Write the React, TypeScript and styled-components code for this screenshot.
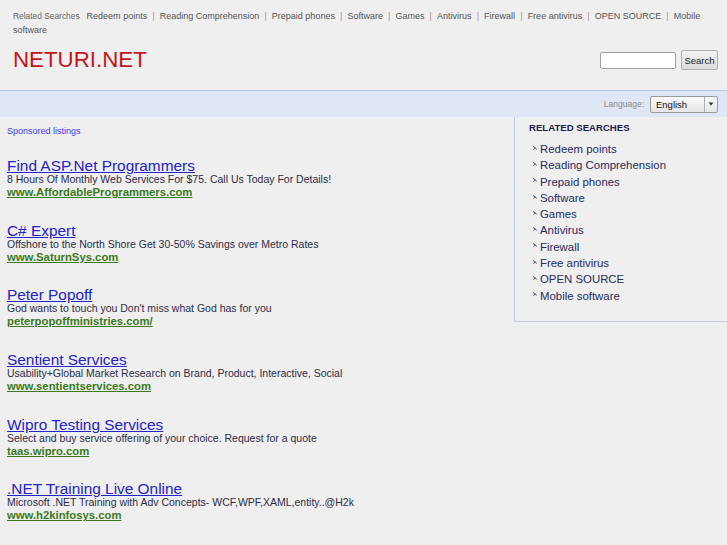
import React from "react";
import styled, { createGlobalStyle } from "styled-components";

const Global = createGlobalStyle`
  html, body { margin: 0; padding: 0; background: #efefef; }
  body { font-family: "Liberation Sans", Arial, sans-serif; }
`;

const Page = styled.div`
  width: 727px;
  min-height: 545px;
  background: #efefef;
  overflow: hidden;
`;

const Header = styled.div`
  padding: 9px 9px 0 13px;
`;

const TopLinks = styled.div`
  font-size: 9px;
  line-height: 14px;
  color: #555;
  width: 701px;
`;

const TopLabel = styled.span`
  font-size: 8.4px;
  color: #666;
  margin-right: 7px;
`;

const TopLink = styled.a`
  color: #555;
  text-decoration: none;
`;

const Word = styled.span``;

const Sep = styled.span`
  color: #b38aa0;
  margin: 0 5.1px;
`;

const LogoRow = styled.div`
  display: flex;
  align-items: center;
  justify-content: space-between;
  height: 34px;
  margin-top: 6px;
`;

const Logo = styled.div`
  font-size: 22.3px;
  color: #c4161c;
`;

const SearchForm = styled.div`
  display: flex;
  align-items: center;
  gap: 5px;
`;

const SearchInput = styled.div`
  width: 74px;
  height: 15px;
  background: #fff;
  border: 1px solid #a0a0a0;
  border-radius: 2px;
`;

const SearchButton = styled.div`
  width: 35px;
  height: 18px;
  border: 1px solid #b0b0b0;
  border-radius: 2px;
  background: linear-gradient(#f2f2f2, #dcdcdc);
  font-size: 9.5px;
  color: #222;
  display: flex;
  align-items: center;
  justify-content: center;
`;

const Band = styled.div`
  margin-top: 13px;
  height: 26px;
  border-top: 1px solid #b5c6ee;
  background: #dfe6f5;
  display: flex;
  align-items: center;
  justify-content: flex-end;
  padding-right: 9px;
  gap: 6px;
`;

const LangLabel = styled.span`
  font-size: 8.5px;
  color: #8c8c8c;
`;

const Select = styled.div`
  width: 66px;
  height: 15px;
  border: 1px solid #9a9a9a;
  border-radius: 2px;
  background: linear-gradient(#fafafa, #e6e6e6);
  display: flex;
  align-items: center;
  font-size: 9.5px;
  color: #111;
`;

const SelectText = styled.span`
  flex: 1;
  padding-left: 5px;
`;

const SelectArrow = styled.span`
  width: 12px;
  height: 100%;
  border-left: 1px solid #b0b0b0;
  display: flex;
  align-items: center;
  justify-content: center;
`;

const Body = styled.div`
  display: flex;
  align-items: flex-start;
`;

const Main = styled.div`
  flex: 1;
  padding: 9px 0 0 7px;
`;

const Sponsored = styled.div`
  font-size: 9px;
  line-height: 11px;
  color: #3b3bea;
  margin-bottom: 21px;
`;

const Ad = styled.div`
  margin-bottom: 23.7px;
`;

const AdTitle = styled.a`
  display: block;
  font-size: 15.4px;
  line-height: 15px;
  color: #2323c8;
  text-decoration: underline;
`;

const AdDesc = styled.div`
  font-size: 10.5px;
  line-height: 13px;
  color: #2c2c48;
`;

const AdUrl = styled.a`
  display: block;
  font-size: 11.3px;
  line-height: 13px;
  font-weight: bold;
  color: #3a7a1c;
  text-decoration: underline;
`;

const Sidebar = styled.div`
  width: 198px;
  height: 199px;
  border-left: 1px solid #bccbea;
  border-bottom: 1px solid #bccbea;
  padding: 5px 0 0 14px;
`;

const SideHead = styled.div`
  font-size: 9.6px;
  font-weight: bold;
  color: #1c2050;
  line-height: 12px;
  margin-bottom: 7px;
`;

const SideList = styled.ul`
  list-style: none;
  margin: 0;
  padding: 0 0 0 4px;
`;

const SideItem = styled.li`
  display: flex;
  align-items: center;
  font-size: 11.4px;
  line-height: 16.3px;
  color: #262b5e;
  gap: 3px;
`;

const Bullet = () => (
  <svg width="4" height="4" viewBox="0 0 4 4" style={{ marginTop: -3 }}>
    <path d="M0 0.5 L2.5 2 L0.5 3.5 M2.5 2 L3.5 3.5" stroke="#3a3f70" strokeWidth="0.9" fill="none" />
  </svg>
);

const topLinks = [
  "Redeem points",
  "Reading Comprehension",
  "Prepaid phones",
  "Software",
  "Games",
  "Antivirus",
  "Firewall",
  "Free antivirus",
  "OPEN SOURCE",
  "Mobile software",
];

const ads = [
  {
    t: "Find ASP.Net Programmers",
    d: "8 Hours Of Monthly Web Services For $75. Call Us Today For Details!",
    u: "www.AffordableProgrammers.com",
  },
  {
    t: "C# Expert",
    d: "Offshore to the North Shore Get 30-50% Savings over Metro Rates",
    u: "www.SaturnSys.com",
  },
  {
    t: "Peter Popoff",
    d: "God wants to touch you Don't miss what God has for you",
    u: "peterpopoffministries.com/",
  },
  {
    t: "Sentient Services",
    d: "Usability+Global Market Research on Brand, Product, Interactive, Social",
    u: "www.sentientservices.com",
  },
  {
    t: "Wipro Testing Services",
    d: "Select and buy service offering of your choice. Request for a quote",
    u: "taas.wipro.com",
  },
  {
    t: ".NET Training Live Online",
    d: "Microsoft .NET Training with Adv Concepts- WCF,WPF,XAML,entity..@H2k",
    u: "www.h2kinfosys.com",
  },
];

export default function App() {
  return (
    <Page>
      <Global />
      <Header>
        <TopLinks>
          <TopLabel>Related Searches</TopLabel>
          {topLinks.map((l, i) => (
            <React.Fragment key={l}>
              {i > 0 && <Sep>|</Sep>}
              <TopLink>
                {l.split(" ").map((w, j) => (
                  <React.Fragment key={j}>
                    {j > 0 && " "}
                    <Word>{w}</Word>
                  </React.Fragment>
                ))}
              </TopLink>
            </React.Fragment>
          ))}
        </TopLinks>
        <LogoRow>
          <Logo>NETURI.NET</Logo>
          <SearchForm>
            <SearchInput />
            <SearchButton>Search</SearchButton>
          </SearchForm>
        </LogoRow>
      </Header>
      <Band>
        <LangLabel>Language:</LangLabel>
        <Select>
          <SelectText>English</SelectText>
          <SelectArrow>
            <svg width="6" height="4" viewBox="0 0 6 4">
              <path d="M0.5 0.5 L5.5 0.5 L3 3.5 Z" fill="#333" />
            </svg>
          </SelectArrow>
        </Select>
      </Band>
      <Body>
        <Main>
          <Sponsored>Sponsored listings</Sponsored>
          {ads.map((a) => (
            <Ad key={a.t}>
              <AdTitle>{a.t}</AdTitle>
              <AdDesc>{a.d}</AdDesc>
              <AdUrl>{a.u}</AdUrl>
            </Ad>
          ))}
        </Main>
        <Sidebar>
          <SideHead>RELATED SEARCHES</SideHead>
          <SideList>
            {topLinks.map((l) => (
              <SideItem key={l}>
                <Bullet />
                {l}
              </SideItem>
            ))}
          </SideList>
        </Sidebar>
      </Body>
    </Page>
  );
}
